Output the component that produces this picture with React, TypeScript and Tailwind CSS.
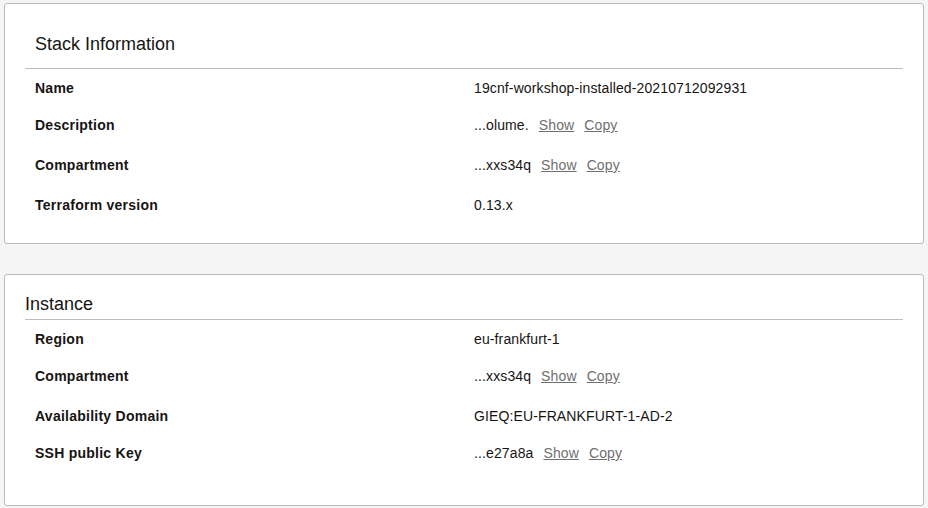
import React from "react";

type Row = { label: string; value: string; links?: boolean };

const stack: Row[] = [
  { label: "Name", value: "19cnf-workshop-installed-20210712092931" },
  { label: "Description", value: "...olume.", links: true },
  { label: "Compartment", value: "...xxs34q", links: true },
  { label: "Terraform version", value: "0.13.x" },
];

const instance: Row[] = [
  { label: "Region", value: "eu-frankfurt-1" },
  { label: "Compartment", value: "...xxs34q", links: true },
  { label: "Availability Domain", value: "GIEQ:EU-FRANKFURT-1-AD-2" },
  { label: "SSH public Key", value: "...e27a8a", links: true },
];

function Rows({ rows }: { rows: Row[] }) {
  return (
    <div className="flex flex-col">
      {rows.map((r, i) => (
        <div
          key={i}
          className={`grid grid-cols-2 pt-[11px] text-[14px] leading-[16px] ${r.links ? "h-[40px]" : "h-[37px]"}`}
        >
          <div className="px-[10px] font-bold tracking-[0.25px] text-[#161513]">{r.label}</div>
          <div className="px-[10px] tracking-[0.12px] text-[#161513] flex">
            <span>{r.value}</span>
            {r.links && (
              <>
                <a className="ml-[10px] text-[#6f6f6f] underline cursor-pointer">Show</a>
                <a className="ml-[10px] text-[#6f6f6f] underline cursor-pointer">Copy</a>
              </>
            )}
          </div>
        </div>
      ))}
    </div>
  );
}

export default function App() {
  return (
    <div
      className="min-h-[508px] bg-[#f5f5f5] px-[4px] pt-[3px]"
      style={{ fontFamily: '"Liberation Sans", Arial, sans-serif' }}
    >
      <div className="bg-white border border-[#b8bbc1] rounded-[3px] px-[20px] pt-[19px] pb-[20px]">
        <h2 className="p-[10px] text-[18px] leading-[22px] font-normal text-[#161513]">Stack Information</h2>
        <div className="mt-[3px] border-t border-[#b8bbc1]" />
        <Rows rows={stack} />
      </div>
      <div className="mt-[30px] bg-white border border-[#b8bbc1] rounded-[3px] px-[20px] pt-[18px] pb-[31px]">
        <h2 className="text-[18px] leading-[22px] font-normal text-[#161513]">Instance</h2>
        <div className="mt-[4px] border-t border-[#b8bbc1]" />
        <Rows rows={instance} />
      </div>
    </div>
  );
}
